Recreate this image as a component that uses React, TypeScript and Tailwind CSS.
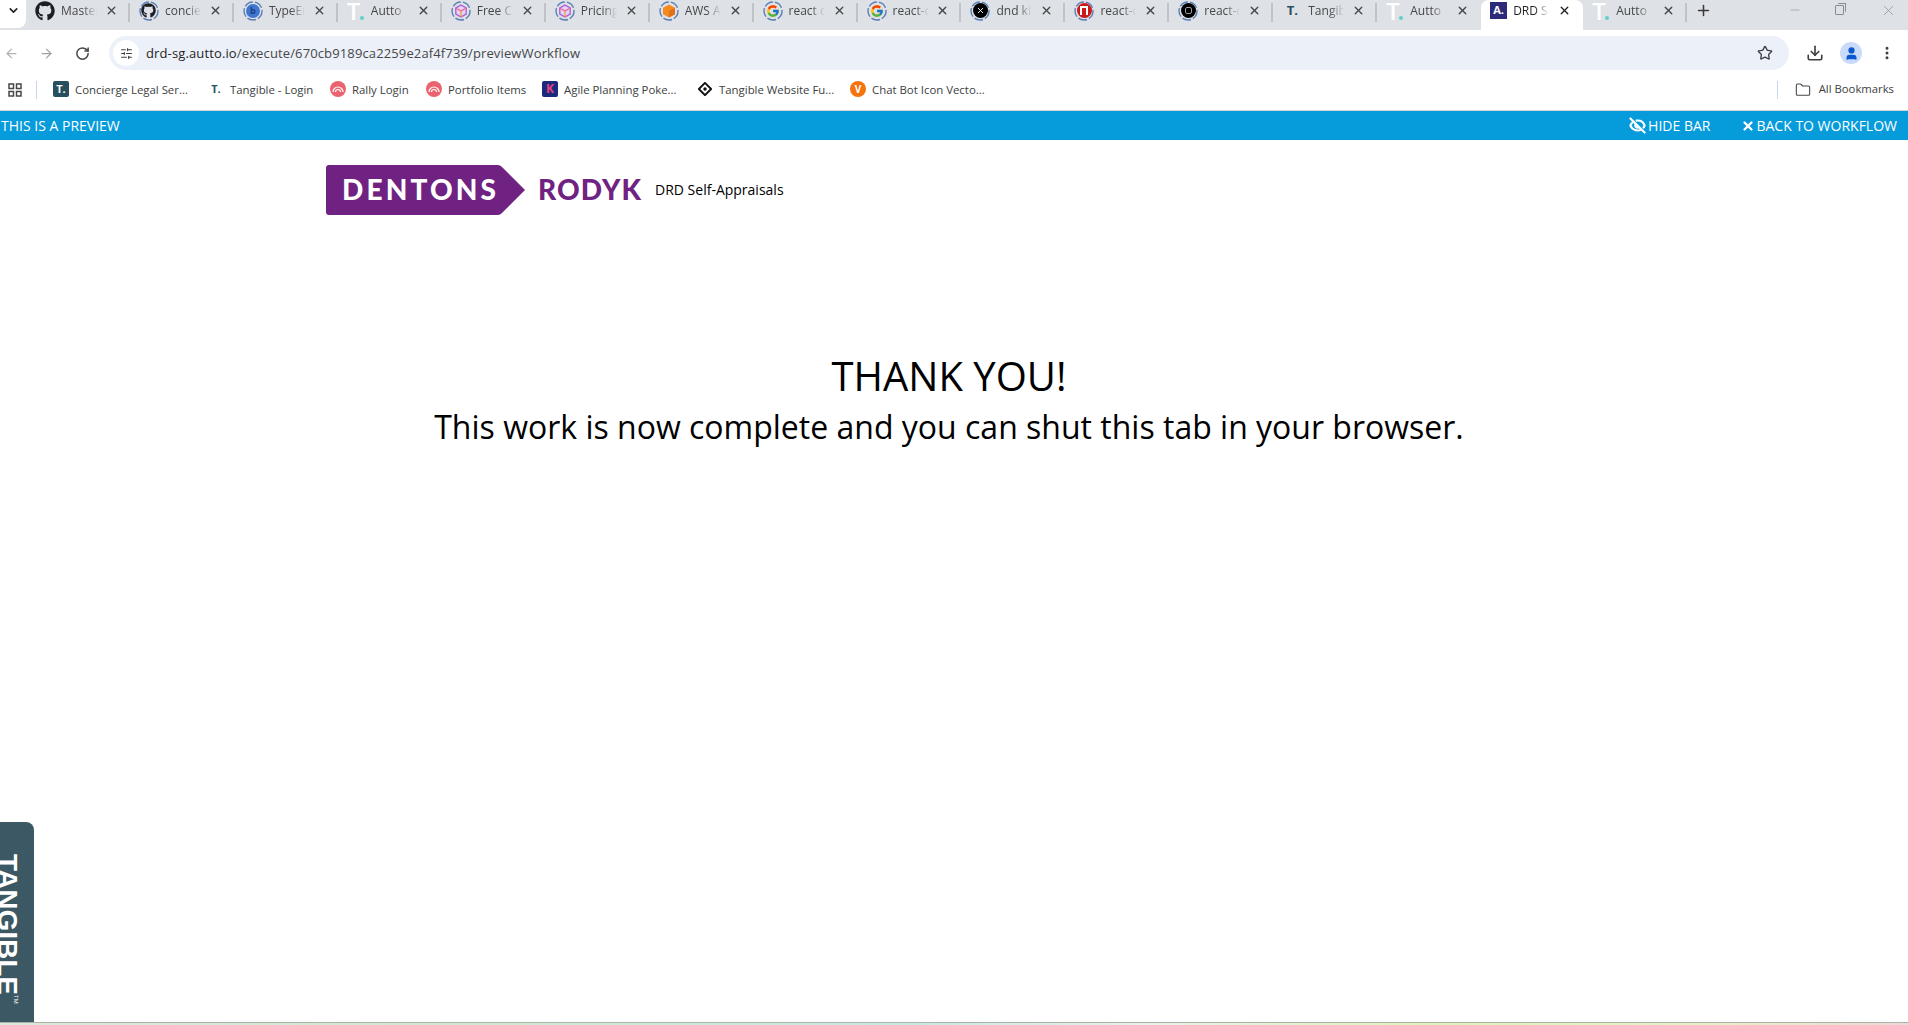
import * as React from "react";
import { ArrowLeft, ArrowRight, Download, EyeOff, Minus, MoreVertical, Plus, RotateCw, Star, User, X, ChevronDown, Folder, SlidersHorizontal } from "lucide-react";
import { FaGithub } from "react-icons/fa";
import { FcGoogle } from "react-icons/fc";

const uiFont = "[font-family:'Open_Sans','Noto_Sans',sans-serif]";

function Ring({ children }: { children: React.ReactNode }) {
  return (
    <span className="relative flex h-[20px] w-[20px] shrink-0 items-center justify-center">
      <svg viewBox="0 0 20 20" className="absolute inset-0 h-[20px] w-[20px]">
        <circle cx="10" cy="10" r="9" fill="none" stroke="#5b7fb5" strokeWidth="1.4" strokeDasharray="9 2" />
      </svg>
      {children}
    </span>
  );
}

function Cube() {
  return (
    <svg viewBox="0 0 14 14" className="h-[14px] w-[14px]">
      <path d="M7 1l5.2 3v6L7 13l-5.2-3V4z" fill="#e3d3f2" stroke="#a95bd6" strokeWidth="1.3" />
      <path d="M1.8 4L7 7l5.2-3" fill="none" stroke="#f0649a" strokeWidth="1.3" />
      <path d="M7 7v6" fill="none" stroke="#f59a4a" strokeWidth="1.3" />
    </svg>
  );
}

function TLogo() {
  return (
    <span className="relative flex h-[20px] w-[18px] shrink-0">
      <span className="text-[24px] leading-[20px] font-semibold text-white">T</span>
      <span className="absolute bottom-[1px] right-[1px] h-[4px] w-[4px] rounded-full bg-[#5fcfc9]" />
    </span>
  );
}

function RallyIcon() {
  return (
    <svg viewBox="0 0 16 16" className="h-[16px] w-[16px]">
      <circle cx="8" cy="8" r="8" fill="#e96470" />
      <path d="M3 11a5 5 0 0 1 10 0" fill="none" stroke="#fff" strokeWidth="1.2" />
      <path d="M5.500 11a2.500 2.500 0 0 1 5 0" fill="none" stroke="#fff" strokeWidth="1.2" />
    </svg>
  );
}

type Tab = { icon: React.ReactNode; title: string; active?: boolean };

const tabs: Tab[] = [
  { icon: <FaGithub className="h-[20px] w-[20px] text-[#1b1f23]" />, title: "Master" },
  { icon: <Ring><FaGithub className="h-[15px] w-[15px] text-[#1b1f23]" /></Ring>, title: "concierge" },
  { icon: <Ring><span className="flex h-[14px] w-[14px] items-center justify-center rounded-full bg-[#3f76d2] text-[9px] font-bold text-[#1d3f7c]">b</span></Ring>, title: "TypeError" },
  { icon: <TLogo />, title: "Autto" },
  { icon: <Ring><Cube /></Ring>, title: "Free Chat" },
  { icon: <Ring><Cube /></Ring>, title: "Pricing" },
  {
    icon: (
      <Ring>
        <svg viewBox="0 0 14 14" className="h-[14px] w-[14px]">
          <path d="M7 0.5l6 3.2v6.6l-6 3.2-6-3.2V3.700z" fill="#f58a1f" />
          <path d="M7 7l6-3.300v6.600l-6 3.200z" fill="#e0701a" />
        </svg>
      </Ring>
    ),
    title: "AWS Amplify",
  },
  { icon: <Ring><FcGoogle className="h-[14px] w-[14px]" /></Ring>, title: "react dnd" },
  { icon: <Ring><FcGoogle className="h-[14px] w-[14px]" /></Ring>, title: "react-dnd" },
  {
    icon: (
      <Ring>
        <span className="flex h-[15px] w-[15px] items-center justify-center rounded-full bg-black">
          <X className="h-[9px] w-[9px] text-white" strokeWidth={2.5} />
        </span>
      </Ring>
    ),
    title: "dnd kit",
  },
  {
    icon: (
      <Ring>
        <span className="flex h-[15px] w-[15px] items-end justify-center rounded-full bg-[#cb1a1a] pb-[3px]">
          <span className="h-[9px] w-[8px] border-x-2 border-t-2 border-white" />
        </span>
      </Ring>
    ),
    title: "react-dnd",
  },
  {
    icon: (
      <Ring>
        <span className="flex h-[15px] w-[15px] items-center justify-center rounded-full bg-black">
          <span className="h-[7px] w-[7px] rounded-[2px] border border-[#999]" />
        </span>
      </Ring>
    ),
    title: "react-dnd",
  },
  { icon: <span className="flex h-[20px] w-[20px] items-center justify-center text-[13px] font-bold text-[#27505f]">T.</span>, title: "Tangible" },
  { icon: <TLogo />, title: "Autto" },
  {
    icon: (
      <span className="flex h-[17px] w-[17px] items-center justify-center bg-[#2d2a7a] text-[11px] font-bold text-white">A.</span>
    ),
    title: "DRD Self",
    active: true,
  },
  { icon: <TLogo />, title: "Autto" },
];

function TabItem({ tab, showSep }: { tab: Tab; showSep: boolean }) {
  return (
    <div className={`relative flex h-[30px] shrink-0 items-center pb-[9px] pl-[9px] pr-[12px] ${tab.active ? "w-[102px] rounded-t-[8px] bg-white" : "w-[103.95px]"}`}>
      {tab.icon}
      <span
        className={`ml-[6px] w-[36px] overflow-hidden whitespace-nowrap text-[12px] [mask-image:linear-gradient(to_right,black_60%,transparent)] ${tab.active ? "text-[#1f1f1f]" : "text-[#45474a]"}`}
      >
        {tab.title}
      </span>
      <X className={`ml-auto h-[13px] w-[13px] shrink-0 ${tab.active ? "text-[#1f1f1f]" : "text-[#45474a]"}`} strokeWidth={2.5} />
      {showSep && <span className="absolute right-0 top-[3px] h-[19px] w-[2px] bg-[#bfc2c6]" />}
    </div>
  );
}

function TabStrip() {
  return (
    <div className="flex h-[30px] items-start bg-[#dee1e6]">
      <div className="flex h-[28px] w-[26px] shrink-0 items-center justify-center rounded-br-[8px] bg-white pb-[8px]">
        <ChevronDown className="h-[13px] w-[13px] text-[#222]" strokeWidth={3} />
      </div>
      {tabs.map((tab, i) => (
        <TabItem key={i} tab={tab} showSep={!tab.active && !tabs[i + 1]?.active} />
      ))}
      <Plus className="ml-[8px] mt-[2px] h-[17px] w-[17px] shrink-0 text-[#3a3a3a]" strokeWidth={2.2} />
      <div className="ml-auto flex h-[20px] items-center">
        <Minus className="mr-[33px] h-[14px] w-[14px] text-[#8a8c8f]" strokeWidth={1} />
        <span className="relative mr-[36px] block h-[10px] w-[9px] rounded-[1px] border border-[#8a8c8f]">
          <span className="absolute right-[-3px] top-[-3px] h-[9px] w-[8px] rounded-[1px] border-r border-t border-[#8a8c8f]" />
        </span>
        <X className="mr-[11px] h-[17px] w-[17px] text-[#8a8c8f]" strokeWidth={1} />
      </div>
    </div>
  );
}

function Toolbar() {
  return (
    <div className="flex h-[44px] items-center bg-white pl-[4px] pt-[2px]">
      <ArrowLeft className="h-[15px] w-[15px] text-[#b1b3b6]" />
      <ArrowRight className="ml-[20px] h-[15px] w-[15px] text-[#a0a2a5]" />
      <RotateCw className="ml-[21px] h-[15px] w-[15px] text-[#45474a]" strokeWidth={2.4} />
      <div className="ml-[19px] flex h-[34px] w-[1680px] items-center rounded-full bg-[#ecf0f8] pl-[4px] pr-[16px]">
        <span className="flex h-[26px] w-[26px] items-center justify-center rounded-full bg-white">
          <SlidersHorizontal className="h-[13px] w-[13px] text-[#3d3f42]" />
        </span>
        <span className="ml-[7px] pt-[1px] text-[13px] tracking-[0.13px] text-[#1f1f1f]">
          drd-sg.autto.io<span className="text-[#474747]">/execute/670cb9189ca2259e2af4f739/previewWorkflow</span>
        </span>
        <Star className="ml-auto h-[16px] w-[16px] text-[#3d3f42]" strokeWidth={2} />
      </div>
      <Download className="ml-[17px] h-[18px] w-[18px] text-[#3d3f42]" strokeWidth={2.2} />
      <span className="ml-[16px] flex h-[22px] w-[22px] items-center justify-center rounded-full bg-[#c9dbf8]">
        <User className="h-[15px] w-[15px] fill-[#0b57d0] text-[#0b57d0]" />
      </span>
      <MoreVertical className="ml-[17px] h-[16px] w-[16px] text-[#3d3f42]" strokeWidth={2.5} />
    </div>
  );
}

const bookmarks: { icon: React.ReactNode; label: string; width: string }[] = [
  {
    icon: <span className="flex h-[16px] w-[16px] items-center justify-center rounded-[2px] bg-[#27505f] text-[11px] font-bold text-white">T.</span>,
    label: "Concierge Legal Ser...",
    width: "w-[155px]",
  },
  {
    icon: <span className="flex h-[16px] w-[16px] items-center justify-center text-[11px] font-bold text-[#27505f]">T.</span>,
    label: "Tangible - Login",
    width: "w-[122px]",
  },
  { icon: <RallyIcon />, label: "Rally Login", width: "w-[96px]" },
  { icon: <RallyIcon />, label: "Portfolio Items", width: "w-[116px]" },
  {
    icon: <span className="flex h-[16px] w-[16px] items-center justify-center rounded-[2px] bg-[#1b2a7c] text-[12px] font-bold text-[#e9407f]">K</span>,
    label: "Agile Planning Poke...",
    width: "w-[155px]",
  },
  {
    icon: (
      <svg viewBox="0 0 16 16" className="h-[14px] w-[14px]">
        <path d="M8 1l7 7-7 7-7-7z" fill="none" stroke="#111" strokeWidth="2.2" />
        <circle cx="8" cy="8" r="2" fill="#111" />
      </svg>
    ),
    label: "Tangible Website Fu...",
    width: "w-[153px]",
  },
  {
    icon: <span className="flex h-[16px] w-[16px] items-center justify-center rounded-full bg-[#f5730c] text-[10px] font-bold text-white">V</span>,
    label: "Chat Bot Icon Vecto...",
    width: "w-[160px]",
  },
];

function BookmarksBar() {
  return (
    <div className="flex h-[37px] items-center border-b border-[#d5d7da] bg-white pb-[5px] pl-[8px]">
      <svg viewBox="0 0 14 14" className="h-[14px] w-[14px] shrink-0" fill="none" stroke="#45474a" strokeWidth="1.500">
        <rect x="1" y="1" width="4.500" height="4.500" />
        <rect x="8.500" y="1" width="4.500" height="4.500" />
        <rect x="1" y="8.500" width="4.500" height="4.500" />
        <rect x="8.500" y="8.500" width="4.500" height="4.500" />
      </svg>
      <span className="ml-[14px] mr-[16px] h-[18px] w-[1px] bg-[#c7d7ee]" />
      {bookmarks.map((b) => (
        <div key={b.label} className={`flex shrink-0 items-center gap-[6px] ${b.width}`}>
          <span className="flex w-[16px] justify-center">{b.icon}</span>
          <span className="whitespace-nowrap text-[11.4px] text-[#3c3e41]">{b.label}</span>
        </div>
      ))}
      <span className="ml-auto h-[18px] w-[1px] bg-[#c7d7ee]" />
      <Folder className="ml-[17px] h-[16px] w-[16px] text-[#45474a]" strokeWidth={1.6} />
      <span className="ml-[8px] mr-[14px] whitespace-nowrap text-[11.3px] text-[#3c3e41]">All Bookmarks</span>
    </div>
  );
}

function PreviewBar() {
  return (
    <div className="flex h-[29px] items-center bg-[#069bdb] pl-[1px] pr-[11px] text-[14px] text-white">
      <span>THIS IS A PREVIEW</span>
      <span className="ml-auto flex items-center gap-[2px]">
        <EyeOff className="h-[17px] w-[17px]" strokeWidth={3} />
        HIDE BAR
      </span>
      <span className="ml-[31px] flex items-center gap-[1px]">
        <X className="h-[14px] w-[14px]" strokeWidth={4} />
        BACK TO WORKFLOW
      </span>
    </div>
  );
}

function Logo() {
  return (
    <svg viewBox="0 0 316 50" className="h-[50px] w-[316px] shrink-0">
      <path d="M3 0H172Q174 0 176 2L199 25L176 48Q174 50 172 50H3Q0 50 0 47V3Q0 0 3 0Z" fill="#6f2282" />
      <text x="16" y="35" textLength="154" lengthAdjust="spacing" fontFamily="Lato, sans-serif" fontWeight="900" fontSize="28" fill="#fff">
        DENTONS
      </text>
      <text x="212" y="35" textLength="103" lengthAdjust="spacing" fontFamily="Lato, sans-serif" fontWeight="900" fontSize="28" fill="#6f2282">
        RODYK
      </text>
    </svg>
  );
}

export default function App() {
  return (
    <div className={`relative flex h-[1025px] w-[1908px] flex-col overflow-hidden bg-white ${uiFont}`}>
      <TabStrip />
      <Toolbar />
      <BookmarksBar />
      <PreviewBar />

      <div className="flex items-center pl-[326px] pt-[25px]">
        <Logo />
        <span className="ml-[13px] pb-[2px] text-[14px] text-black">DRD Self-Appraisals</span>
      </div>

      <div className="flex flex-1 flex-col items-center pr-[10px] pt-[134px] text-black">
        <div className="text-[40px] leading-[54px]">THANK YOU!</div>
        <div className="text-[32px] leading-[48px]">This work is now complete and you can shut this tab in your browser.</div>
      </div>

      <div className="h-[3px] border-t border-[#a9b3a6] bg-[linear-gradient(to_right,#dfe6dc,#cfe8d2_25%,#c8e8e4_48%,#eceeea_60%,#e3f2b8_75%,#e9efc8_90%,#ecd8d8)]" />

      <div className="absolute bottom-[3px] left-0 flex h-[200px] w-[34px] justify-end overflow-hidden rounded-tr-[8px] bg-[#3b5864]">
        <span className="mr-[10px] mt-[32px] whitespace-nowrap text-[28px] leading-[34px] font-bold text-white [font-family:'Liberation_Sans',sans-serif] [writing-mode:vertical-rl]">
          TANGIBLE
          <span className="align-[9px] text-[6px] leading-none font-normal">TM</span>
        </span>
      </div>
    </div>
  );
}
